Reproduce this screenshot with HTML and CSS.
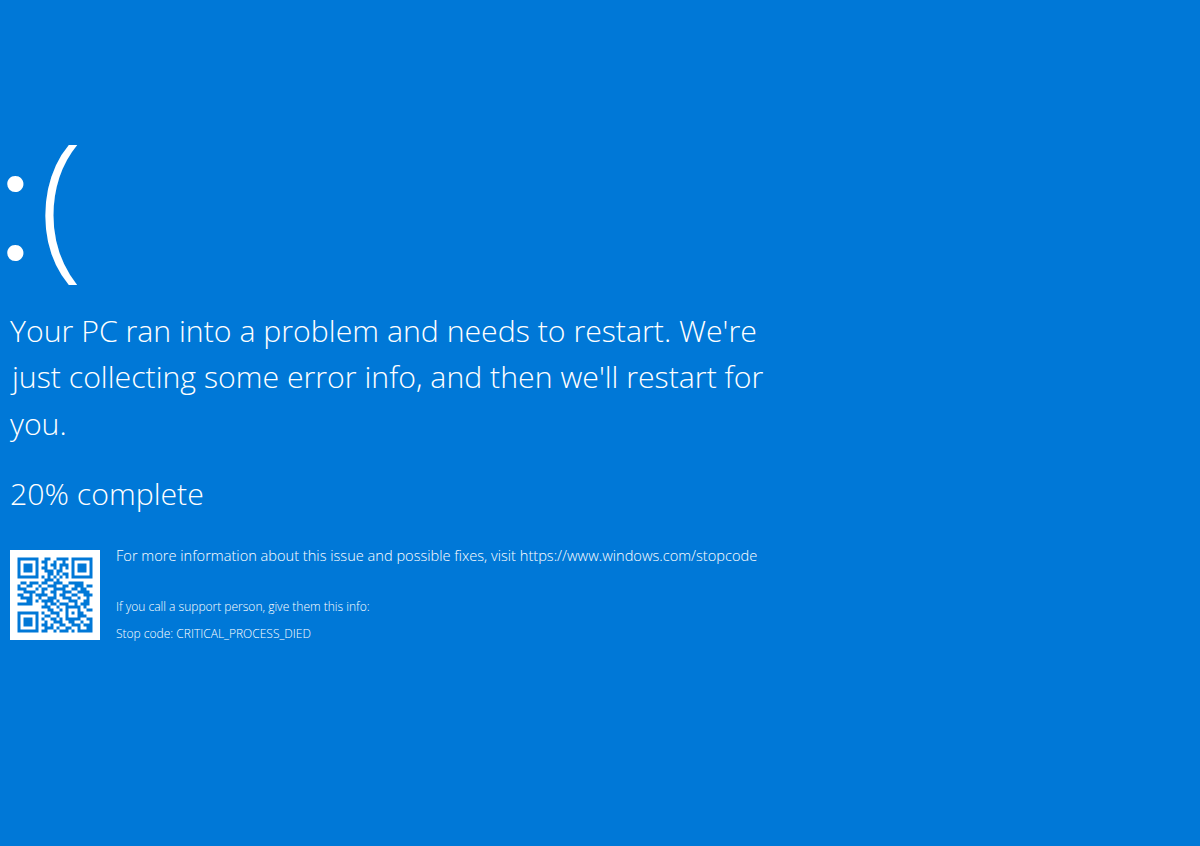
FILE: index.html
```html
<!DOCTYPE html>
<html lang="en">
<head>
<meta charset="utf-8">
<title>Your PC ran into a problem</title>
<link rel="stylesheet" href="styles.css">
</head>
<body>
<main class="screen">
  <div class="face"><span class="eyes">:</span><span class="mouth">(</span></div>
  <p class="message">
    <span class="line">Your PC ran into a problem and needs to restart. We're</span>
    <span class="line line-j">just collecting some error info, and then we'll restart for</span>
    <span class="line">you.</span>
  </p>
  <p class="progress">20% complete</p>
  <section class="details">
    <svg class="qr" viewBox="-2.5 -2.5 30 30" aria-label="QR code">
      <rect class="qr-bg" x="-2.5" y="-2.5" width="30" height="30"/>
      <path class="qr-dots" d="M0 .5h7M9 .5h2M13 .5h4M18 .5h7
M0 1.5h1M6 1.5h1M8 1.5h2M12 1.5h1M15 1.5h1M18 1.5h1M24 1.5h1
M0 2.5h1M2 2.5h3M6 2.5h1M9 2.5h1M11 2.5h2M14 2.5h3M18 2.5h1M20 2.5h3M24 2.5h1
M0 3.5h1M2 3.5h3M6 3.5h1M8 3.5h2M12 3.5h1M14 3.5h1M16 3.5h1M18 3.5h1M20 3.5h3M24 3.5h1
M0 4.5h1M2 4.5h3M6 4.5h1M9 4.5h3M13 4.5h2M18 4.5h1M20 4.5h3M24 4.5h1
M0 5.5h1M6 5.5h1M10 5.5h2M13 5.5h1M15 5.5h2M18 5.5h1M24 5.5h1
M0 6.5h7M8 6.5h1M10 6.5h1M12 6.5h1M14 6.5h1M16 6.5h1M18 6.5h7
M9 7.5h3M13 7.5h1
M1 8.5h2M4 8.5h3M8 8.5h2M12 8.5h3M17 8.5h5
M0 9.5h1M3 9.5h2M7 9.5h1M10 9.5h3M15 9.5h2M19 9.5h3M23 9.5h2
M0 10.5h3M6 10.5h1M8 10.5h2M12 10.5h4M18 10.5h2M21 10.5h2
M2 11.5h4M8 11.5h1M11 11.5h2M15 11.5h3M20 11.5h4
M0 12.5h2M4 12.5h1M6 12.5h4M12 12.5h1M14 12.5h2M18 12.5h2M22 12.5h3
M1 13.5h4M7 13.5h1M10 13.5h3M15 13.5h3M20 13.5h1M23 13.5h1
M3 14.5h2M6 14.5h1M8 14.5h4M13 14.5h1M17 14.5h3M22 14.5h2
M0 15.5h5M9 15.5h1M11 15.5h2M14 15.5h3M19 15.5h1M21 15.5h3
M8 16.5h3M13 16.5h1M16 16.5h5M22 16.5h1
M10 17.5h2M14 17.5h1M16 17.5h1M20 17.5h1M23 17.5h2
M0 18.5h7M8 18.5h1M11 18.5h3M16 18.5h1M18 18.5h1M20 18.5h2
M0 19.5h1M6 19.5h1M9 19.5h2M13 19.5h1M16 19.5h1M20 19.5h3
M0 20.5h1M2 20.5h3M6 20.5h1M8 20.5h1M11 20.5h2M14 20.5h1M16 20.5h5M23 20.5h2
M0 21.5h1M2 21.5h3M6 21.5h1M9 21.5h1M12 21.5h3M17 21.5h2M21 21.5h1M24 21.5h1
M0 22.5h1M2 22.5h3M6 22.5h1M8 22.5h2M11 22.5h1M14 22.5h2M18 22.5h3M22 22.5h3
M0 23.5h1M6 23.5h1M9 23.5h3M13 23.5h1M16 23.5h2M20 23.5h1M23 23.5h2
M0 24.5h7M8 24.5h2M12 24.5h1M14 24.5h3M18 24.5h1M20 24.5h5"/>
    </svg>
    <div class="info">
      <p class="visit">For more information about this issue and possible fixes, visit https://www.windows.com/stopcode</p>
      <p class="small support">If you call a support person, give them this info:</p>
      <p class="small">Stop code: CRITICAL_PROCESS_DIED</p>
    </div>
  </section>
</main>
</body>
</html>
```
FILE: styles.css
```css
html, body {
  margin: 0;
  height: 100%;
  overflow: hidden;
  background: #0078d7;
}

.screen {
  box-sizing: border-box;
  height: 846px;
  padding: 112px 0 0 10px;
  color: #fff;
  font-family: "Open Sans", "Noto Sans", sans-serif;
  font-weight: 300;
}

.face {
  display: flex;
  height: 190px;
  margin-left: -10px;
}

.eyes {
  font-family: "Lato", sans-serif;
  font-size: 174px;
  font-weight: 300;
  line-height: 190px;
  margin-top: -14px;
  margin-left: -5.5px;
}

.mouth {
  font-size: 161px;
  line-height: 190px;
  margin-top: -9px;
  margin-left: 2.5px;
}

.message {
  width: 800px;
  margin: 6px 0 0;
  font-size: 30.25px;
  line-height: 46.4px;
}

.line {
  display: block;
}

.line-j {
  padding-left: 2px;
}

.progress {
  margin: 22.3px 0 0;
  font-size: 30.25px;
  line-height: 47px;
}

.details {
  display: flex;
  gap: 16px;
  margin-top: 33px;
}

.qr {
  flex: none;
  width: 90px;
  height: 90px;
}

.qr-bg {
  fill: #fff;
}

.qr-dots {
  fill: none;
  stroke: #0078d7;
  stroke-width: 1;
}

.info p {
  margin: 0;
}

.visit {
  font-size: 14.6px;
  line-height: 20px;
}

.info .visit {
  margin-top: -5px;
}

.small {
  font-size: 12px;
  line-height: 16px;
}

.info .support {
  margin-top: 34px;
  margin-bottom: 11px;
}
```
